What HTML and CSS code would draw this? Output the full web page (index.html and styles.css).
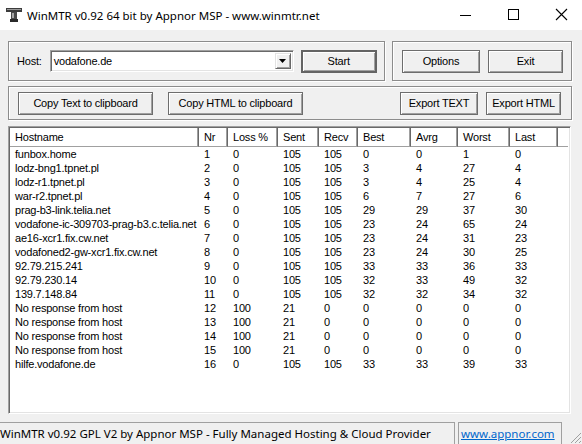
FILE: index.html
```html
<!DOCTYPE html>
<html>
<head>
<meta charset="utf-8">
<link rel="stylesheet" href="styles.css">
</head>
<body>
<div class="window">
  <div class="titlebar">
    <svg class="appicon" width="18" height="16" viewBox="0 0 18 16">
      <rect x="1" y="1" width="16" height="4" fill="#3c3c3c"/>
      <rect x="2" y="2" width="14" height="1" fill="#9a9a9a"/>
      <rect x="6" y="5" width="6" height="7" fill="#4a4a4a"/>
      <rect x="7" y="6" width="2" height="5" fill="#a8a8a8"/>
      <rect x="5" y="12" width="8" height="3" fill="#2a2a2a"/>
    </svg>
    <span class="title">WinMTR v0.92 64 bit by Appnor MSP - www.winmtr.net</span>
    <div class="controls">
      <svg class="ctl" width="46" height="30" viewBox="0 0 46 30"><rect x="18" y="15" width="11" height="1" fill="#000"/></svg>
      <svg class="ctl" width="46" height="30" viewBox="0 0 46 30"><rect x="18.5" y="9.5" width="10" height="10" fill="none" stroke="#000" stroke-width="1"/></svg>
      <svg class="ctl" width="46" height="30" viewBox="0 0 46 30"><path d="M18 9 L29 20 M29 9 L18 20" stroke="#000" stroke-width="1.1" fill="none"/></svg>
    </div>
  </div>

  <div class="content">
    <div class="toprow">
      <div class="group g-host">
        <span class="label">Host:</span>
        <div class="combo">
          <span class="combo-text">vodafone.de</span>
          <span class="combo-btn"><svg width="7" height="4" viewBox="0 0 7 4"><path d="M0 0 H7 L3.5 4 Z" fill="#000"/></svg></span>
        </div>
        <button class="btn btn-default w-start">Start</button>
      </div>
      <div class="group g-opts">
        <button class="btn w-opt">Options</button>
        <button class="btn w-exit">Exit</button>
      </div>
    </div>

    <div class="group g-export">
      <button class="btn w-copytext">Copy Text to clipboard</button>
      <button class="btn w-copyhtml">Copy HTML to clipboard</button>
      <span class="spacer"></span>
      <button class="btn w-opt">Export TEXT</button>
      <button class="btn w-exit">Export HTML</button>
    </div>

    <div class="list">
      <div class="header">
        <div class="hc c1">Hostname</div>
        <div class="hc c2">Nr</div>
        <div class="hc c3">Loss %</div>
        <div class="hc c4">Sent</div>
        <div class="hc c5">Recv</div>
        <div class="hc c6">Best</div>
        <div class="hc c7">Avrg</div>
        <div class="hc c8">Worst</div>
        <div class="hc c9">Last</div>
        <div class="hc cf"></div>
      </div>
      <div class="rows">
        <div class="row"><span class="c1">funbox.home</span><span class="c2">1</span><span class="c3">0</span><span class="c4">105</span><span class="c5">105</span><span class="c6">0</span><span class="c7">0</span><span class="c8">1</span><span class="c9">0</span></div>
        <div class="row"><span class="c1">lodz-bng1.tpnet.pl</span><span class="c2">2</span><span class="c3">0</span><span class="c4">105</span><span class="c5">105</span><span class="c6">3</span><span class="c7">4</span><span class="c8">27</span><span class="c9">4</span></div>
        <div class="row"><span class="c1">lodz-r1.tpnet.pl</span><span class="c2">3</span><span class="c3">0</span><span class="c4">105</span><span class="c5">105</span><span class="c6">3</span><span class="c7">4</span><span class="c8">25</span><span class="c9">4</span></div>
        <div class="row"><span class="c1">war-r2.tpnet.pl</span><span class="c2">4</span><span class="c3">0</span><span class="c4">105</span><span class="c5">105</span><span class="c6">6</span><span class="c7">7</span><span class="c8">27</span><span class="c9">6</span></div>
        <div class="row"><span class="c1">prag-b3-link.telia.net</span><span class="c2">5</span><span class="c3">0</span><span class="c4">105</span><span class="c5">105</span><span class="c6">29</span><span class="c7">29</span><span class="c8">37</span><span class="c9">30</span></div>
        <div class="row"><span class="c1">vodafone-ic-309703-prag-b3.c.telia.net</span><span class="c2">6</span><span class="c3">0</span><span class="c4">105</span><span class="c5">105</span><span class="c6">23</span><span class="c7">24</span><span class="c8">65</span><span class="c9">24</span></div>
        <div class="row"><span class="c1">ae16-xcr1.fix.cw.net</span><span class="c2">7</span><span class="c3">0</span><span class="c4">105</span><span class="c5">105</span><span class="c6">23</span><span class="c7">24</span><span class="c8">31</span><span class="c9">23</span></div>
        <div class="row"><span class="c1">vodafoned2-gw-xcr1.fix.cw.net</span><span class="c2">8</span><span class="c3">0</span><span class="c4">105</span><span class="c5">105</span><span class="c6">23</span><span class="c7">24</span><span class="c8">30</span><span class="c9">25</span></div>
        <div class="row"><span class="c1">92.79.215.241</span><span class="c2">9</span><span class="c3">0</span><span class="c4">105</span><span class="c5">105</span><span class="c6">33</span><span class="c7">33</span><span class="c8">36</span><span class="c9">33</span></div>
        <div class="row"><span class="c1">92.79.230.14</span><span class="c2">10</span><span class="c3">0</span><span class="c4">105</span><span class="c5">105</span><span class="c6">32</span><span class="c7">33</span><span class="c8">49</span><span class="c9">32</span></div>
        <div class="row"><span class="c1">139.7.148.84</span><span class="c2">11</span><span class="c3">0</span><span class="c4">105</span><span class="c5">105</span><span class="c6">32</span><span class="c7">32</span><span class="c8">34</span><span class="c9">32</span></div>
        <div class="row"><span class="c1">No response from host</span><span class="c2">12</span><span class="c3">100</span><span class="c4">21</span><span class="c5">0</span><span class="c6">0</span><span class="c7">0</span><span class="c8">0</span><span class="c9">0</span></div>
        <div class="row"><span class="c1">No response from host</span><span class="c2">13</span><span class="c3">100</span><span class="c4">21</span><span class="c5">0</span><span class="c6">0</span><span class="c7">0</span><span class="c8">0</span><span class="c9">0</span></div>
        <div class="row"><span class="c1">No response from host</span><span class="c2">14</span><span class="c3">100</span><span class="c4">21</span><span class="c5">0</span><span class="c6">0</span><span class="c7">0</span><span class="c8">0</span><span class="c9">0</span></div>
        <div class="row"><span class="c1">No response from host</span><span class="c2">15</span><span class="c3">100</span><span class="c4">21</span><span class="c5">0</span><span class="c6">0</span><span class="c7">0</span><span class="c8">0</span><span class="c9">0</span></div>
        <div class="row"><span class="c1">hilfe.vodafone.de</span><span class="c2">16</span><span class="c3">0</span><span class="c4">105</span><span class="c5">105</span><span class="c6">33</span><span class="c7">33</span><span class="c8">39</span><span class="c9">33</span></div>
      </div>
    </div>
  </div>

  <div class="statusbar">
    <div class="panel p1">WinMTR v0.92 GPL V2 by Appnor MSP - Fully Managed Hosting &amp; Cloud Provider</div>
    <div class="panel p2"><a class="link" href="#">www.appnor.com</a></div>
    <svg class="grip" width="14" height="14" viewBox="0 0 14 14">
      <path d="M13 3 L3 13 M13 7 L7 13 M13 11 L11 13" stroke="#a0a0a0" stroke-width="1" fill="none"/>
    </svg>
  </div>
</div>
</body>
</html>
```

FILE: styles.css
```css
* { box-sizing: border-box; }
html, body { margin: 0; padding: 0; }
body {
  width: 582px;
  height: 444px;
  overflow: hidden;
  background: #f0f0f0;
  font-family: "Liberation Sans", Arial, sans-serif;
  font-size: 11px;
  color: #000;
}
.window {
  width: 582px;
  height: 444px;
  display: flex;
  flex-direction: column;
}
.titlebar {
  height: 30px;
  background: #fff;
  display: flex;
  align-items: center;
  flex: none;
}
.appicon { margin-left: 5px; margin-top: -1px; flex: none; }
.title {
  margin-left: 4px;
  font-family: "Noto Sans", "Open Sans", sans-serif;
  font-size: 11.5px;
  color: #000;
  white-space: nowrap;
}
.controls {
  margin-left: auto;
  display: flex;
  margin-right: -2px;
}
.ctl { display: block; width: 46px; height: 30px; margin-left: 2px; }

.content {
  flex: 1;
  padding: 11px 10px 0 8px;
  display: flex;
  flex-direction: column;
}
.toprow { display: flex; gap: 7px; }
.group {
  border: 1px solid #8c8c8c;
  box-shadow: inset 1px 1px 0 #fff, 1px 1px 0 #fff;
  display: flex;
  align-items: center;
}
.g-host { width: 377px; height: 40px; padding-left: 8px; }
.g-opts { width: 180px; height: 40px; padding-left: 9px; gap: 8px; }
.g-export { margin-top: 5px; height: 34px; width: 564px; padding-left: 9px; padding-right: 10px; gap: 15px; }
.g-export .w-opt { margin-right: -7px; }
.spacer { flex: 1; }
.label { letter-spacing: -0.2px; }
.combo {
  margin-left: 8px;
  width: 244px;
  height: 22px;
  background: #fff;
  border: 1px solid;
  border-color: #a0a0a0 #fff #fff #a0a0a0;
  box-shadow: inset 1px 1px 0 #696969, inset -1px -1px 0 #e3e3e3;
  display: flex;
  align-items: center;
  position: relative;
}
.combo-text { margin-left: 3px; letter-spacing: -0.2px; }
.combo-btn {
  position: absolute;
  right: 2px;
  top: 2px;
  width: 16px;
  height: 16px;
  background: #f0f0f0;
  border: 1px solid;
  border-color: #e3e3e3 #696969 #696969 #e3e3e3;
  box-shadow: inset 1px 1px 0 #fff, inset -1px -1px 0 #a0a0a0;
  display: flex;
  align-items: center;
  justify-content: center;
}
.btn {
  font-family: "Liberation Sans", Arial, sans-serif;
  font-size: 11px;
  letter-spacing: -0.2px;
  color: #000;
  background: #f0f0f0;
  border: 1px solid #6d6d6d;
  box-shadow: inset 1px 1px 0 #fff, inset -1px -1px 0 #a0a0a0;
  height: 23px;
  padding: 0;
  margin: 0;
}
.btn-default {
  border: 2px solid #646464;
  box-shadow: inset 1px 1px 0 #fff, inset -1px -1px 0 #a0a0a0;
}
.w-start { width: 76px; margin-left: 7px; height: 23px; }
.w-opt { width: 78px; }
.w-exit { width: 75px; }
.w-copytext { width: 135px; }
.w-copyhtml { width: 135px; }

.list {
  margin-top: 6px;
  width: 563px;
  height: 288px;
  background: #fff;
  border: 1px solid;
  border-color: #a0a0a0 #fff #fff #a0a0a0;
  box-shadow: inset 1px 1px 0 #696969, inset -1px -1px 0 #e3e3e3;
  padding: 1px 2px 2px 1px;
  overflow: hidden;
}
.header {
  display: flex;
  height: 19px;
}
.hc {
  height: 19px;
  line-height: 18px;
  padding-left: 5px;
  background: #fff;
  border-right: 1px solid #696969;
  border-bottom: 1px solid #a0a0a0;
  box-shadow: inset -1px 0 0 #a0a0a0, inset 1px 0 0 #fff;
  white-space: nowrap;
  letter-spacing: -0.2px;
  flex: none;
}
.hc.cf { flex: 1; border-right: none; box-shadow: none; }
.c1 { width: 189px; }
.c2 { width: 29px; }
.c3 { width: 50px; }
.c4 { width: 41px; }
.c5 { width: 39px; }
.c6 { width: 53px; }
.c7 { width: 47px; }
.c8 { width: 52px; }
.c9 { width: 48px; }
.rows { display: flex; flex-direction: column; }
.row { display: flex; height: 14px; line-height: 14px; }
.row span {
  flex: none;
  padding-left: 5px;
  white-space: nowrap;
  letter-spacing: -0.2px;
}

.statusbar {
  flex: none;
  height: 22px;
  display: flex;
  align-items: stretch;
  position: relative;
}
.panel {
  font-family: "Noto Sans", "Open Sans", sans-serif;
  font-size: 11.5px;
  white-space: nowrap;
  border-top: 1px solid #a0a0a0;
  border-right: 1px solid #a0a0a0;
  display: flex;
  align-items: center;
  overflow: hidden;
}
.p1 { width: 455px; padding-left: 0; }
.p2 { width: 104px; margin-left: 3px; border-left: 1px solid #a0a0a0; padding-left: 2px; }
.link { color: #0066cc; text-decoration: underline; }
.grip { position: absolute; right: 0; bottom: 0; }
```
